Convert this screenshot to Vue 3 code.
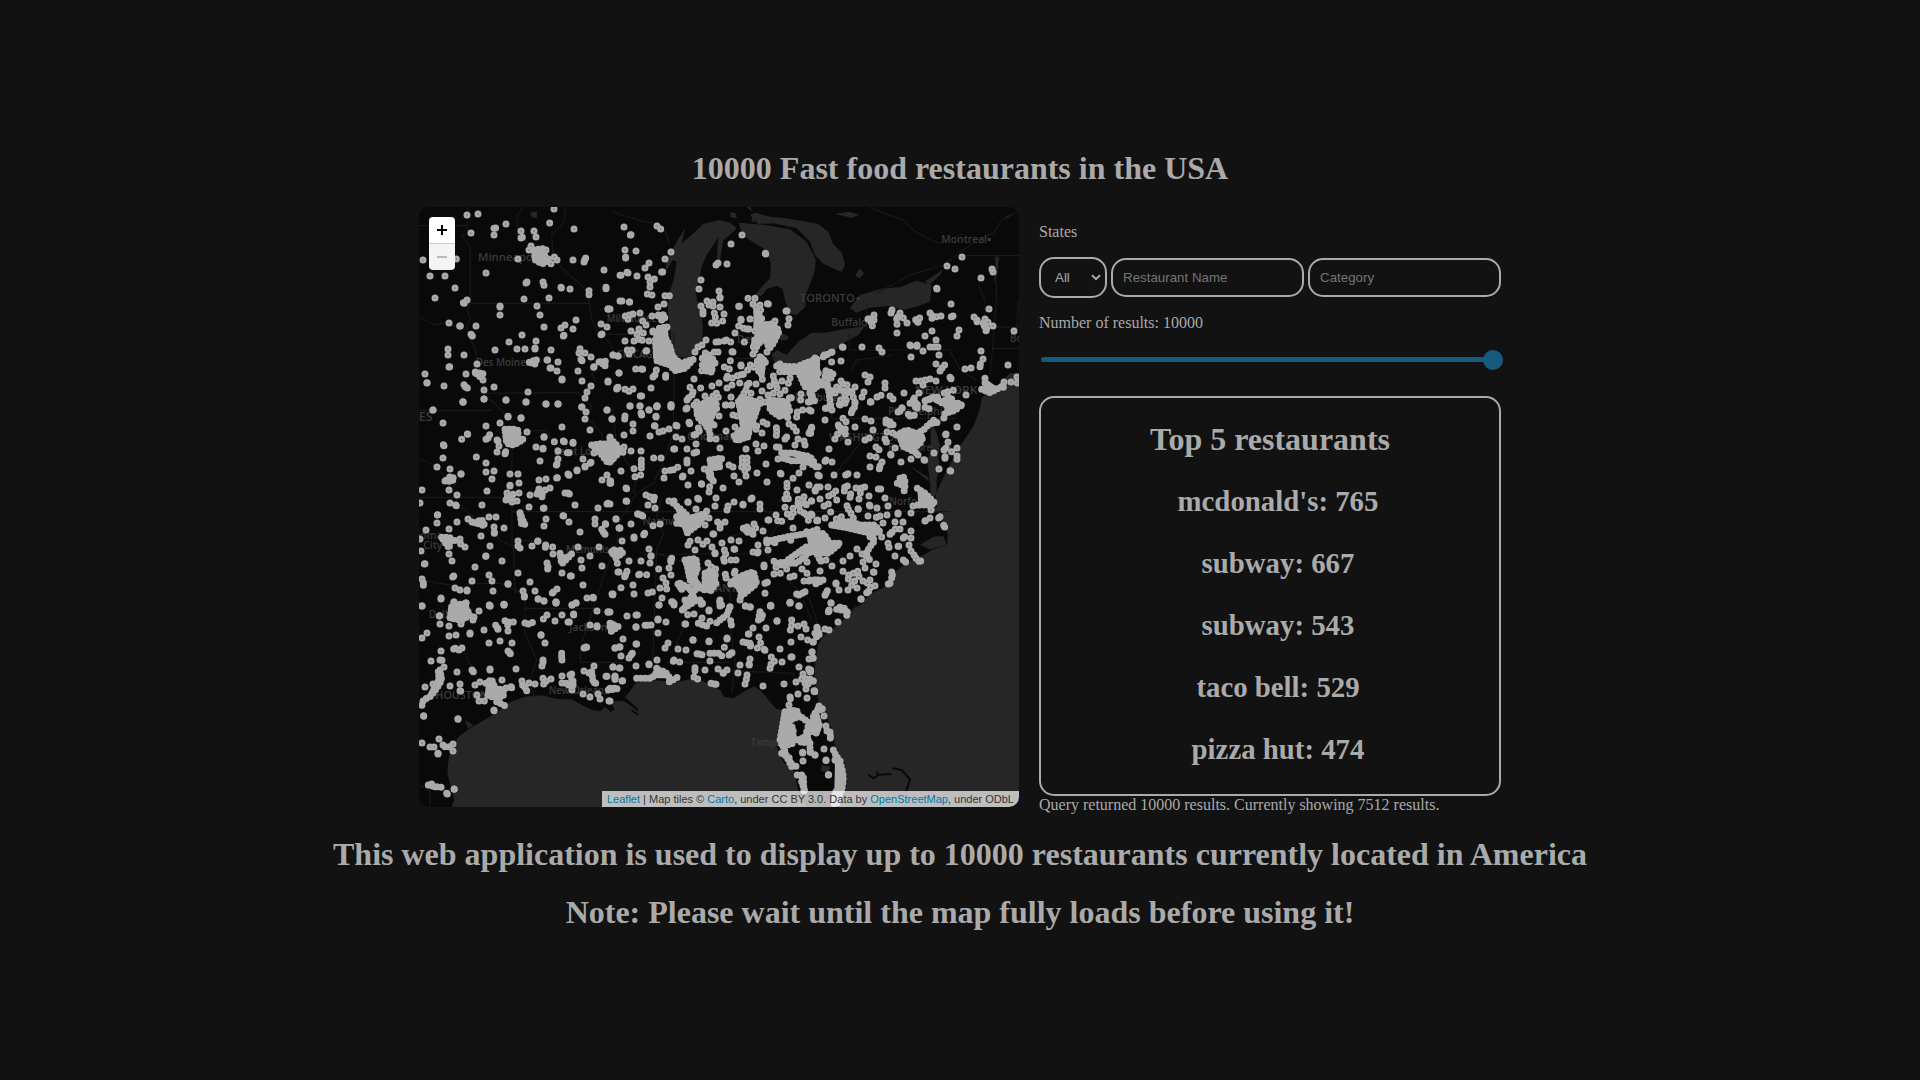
<script setup>
const top = [
  "mcdonald's: 765",
  'subway: 667',
  'subway: 543',
  'taco bell: 529',
  'pizza hut: 474'
]

// Restaurant positions by map sector: [x offset, y offset, "x,y x,y ..."]
const sectors = [
  [0, 0, '171,45 204,42 288,72 183,99 252,85 257,84 252,105 333,93 337,112 333,114 372,93 378,111 419,69 432,27 492,87 39,180 139,177 60,228 105,228 228,219 135,264 75,294 171,300 160,308 163,310 324,177 357,150 363,138 408,150 433,171 441,180 423,191 489,180 522,186 527,174 524,180 582,210 351,246 348,249 399,246 402,256 453,262 454,264 480,267 537,272 537,284 588,262 588,266 630,226 630,303 594,326 594,328 342,297 417,294 381,318 390,345 270,318 270,321 270,345 117,369 149,378 151,378 198,378 183,403 187,408 402,381 465,375 453,384 489,387 498,360 462,406 460,408 573,372 591,381 573,404 576,402 336,405 297,426 378,423 321,447 345,447 375,444 375,447 423,450 255,450 114,447 114,465 162,465 119,500 117,501 201,492 45,522 51,548 51,549 102,558 168,522 413,480 411,480 444,486 423,504 420,504 441,513 456,537 456,540 510,446 507,459 525,459 513,478 516,482 543,471 504,513 552,500 551,502 567,486 609,465 624,468 627,519 594,543 594,546 516,543 543,558 531,576 525,594 621,564 620,567 515,621 222,570 252,561 162,554 166,560 172,564 354,576 288,600 348,606 408,612 444,612 222,597 159,605 159,607 69,630 591,630 219,540 196,516'],
  [600, 0, '42,81 63,104 61,105 141,78 152,87 45,150 47,171 47,174 78,153 117,189 105,204 165,177 183,156 33,226 51,217 54,219 81,228 114,231 133,237 120,246 120,261 158,216 155,216 112,282 126,285 165,287 178,287 162,312 144,321 36,303 58,306 59,306 0,327 363,132 396,105 466,160 467,162 318,195 324,189 351,192 273,240 267,267 327,273 330,292 330,294 291,303 309,306 309,318 297,315 273,318 279,333 279,342 330,321 342,342 313,339 316,352 305,369 320,370 338,363 386,319 388,319 414,295 435,295 429,312 438,321 450,315 472,311 475,312 452,330 528,333 531,333 537,356 534,375 495,363 393,358 393,361 420,357 386,378 375,399 401,385 417,387 411,387 435,393 403,426 46,348 58,345 69,342 90,339 54,358 98,363 108,375 63,393 87,387 81,403 100,399 126,348 146,348 160,345 155,360 171,381 153,387 129,393 129,396 45,423 72,423 87,418 97,421 117,423 52,450 66,450 57,462 108,453 110,452 9,465 24,468 27,519 22,564 24,562 45,568 57,574 69,567 77,507 94,507 98,508 139,510 135,525 129,531 167,526 167,532 123,564 91,588 95,588 60,618 90,618 117,630 141,618 141,620 183,615 183,621 288,420 276,435 264,441 255,456 318,426 326,425 343,423 349,420 362,426 313,456 324,456 366,455 369,456 361,482 286,459 297,465 277,475 293,475 308,477 290,489 308,490 275,512 290,513 303,516 277,495 315,489 252,537 240,562 249,576 236,593 246,585 272,564 285,588 306,558 327,549 319,580 309,588 325,592 260,606 231,624 252,615 275,624 290,610 314,606 350,535 352,529 367,534 382,527 393,524 400,523 366,555 351,564 363,591 346,615 364,615 389,549 411,555 417,550 438,552 408,570 423,580 402,580 395,592 390,600 414,598 402,616 343,501 358,507 393,495 393,498 413,510 421,495 429,462 435,450 471,456 430,440 436,430 453,473 442,483 461,480 466,487 441,493 453,505 446,513 454,522 457,538 432,502 456,573 480,558 474,585 490,580 498,553 510,582 525,571 501,564 516,543 535,550 540,534 493,543 490,528 509,515 538,594 544,593 573,582 604,592 572,600 595,606 495,606 465,606 450,598 452,610 484,618 519,624 527,620 520,606 440,618 427,625 600,576 624,519 507,495 545,507 510,492 625,555 612,567'],
  [1200, 0, '456,171 411,198 435,207 380,265 381,267 513,234 546,207 549,216 423,312 537,327 246,330 243,339 192,345 180,357 192,360 183,366 187,377 174,357 270,339 264,350 280,354 260,357 261,373 291,369 261,399 329,354 317,359 323,365 324,367 360,339 367,347 379,350 366,355 393,348 424,350 429,348 345,408 366,393 378,420 447,390 441,408 492,351 501,360 501,365 525,357 534,367 549,378 523,378 530,386 528,392 612,393 97,441 99,442 156,441 207,444 216,456 303,471 300,435 302,437 321,435 321,439 339,453 360,441 372,441 384,441 387,465 378,492 404,495 396,504 390,513 465,507 483,504 513,453 519,477 511,492 510,500 594,495 165,525 180,531 174,546 93,483 66,456 65,486 43,465 318,543 333,543 346,540 360,537 378,543 339,555 420,532 423,536 135,561 162,576 156,591 225,549 225,564 282,579 213,586 201,591 240,588 249,597 181,605 183,606 468,585 276,624 313,594 327,579 318,610 310,600 350,600 360,596 369,591 381,600 403,579 413,575 430,571 425,597 388,603 409,615 454,615 582,546 603,546 621,531 622,549 580,562 24,519 93,543 99,552 111,554 117,573 126,577 130,592 105,585 92,600 88,613 109,600 135,606 133,622 80,561 75,579 65,572 25,545 37,555 52,553 60,600 62,616 46,625 6,585 9,600 15,474'],
  [0, 600, '69,30 159,6 222,-3 288,0 348,6 408,12 444,12 99,69 294,49 294,51 333,53 333,55 270,69 228,78 351,96 456,81 516,21 528,36 525,57 591,30 606,57 540,90 239,104 234,114 228,118 261,120 264,123 267,138 261,156 287,155 285,161 172,102 173,103 155,118 100,134 102,137 99,174 81,201 120,207 153,222 117,270 141,285 36,270 30,309 120,309 137,315 139,317 82,345 83,344 81,369 48,390 30,417 141,366 117,387 33,453 126,483 45,491 43,492 199,171 228,189 228,216 252,213 246,237 231,273 300,222 324,222 300,256 300,258 327,249 402,110 402,112 378,141 399,145 399,147 390,183 433,125 460,123 463,125 489,127 489,130 444,153 472,158 477,158 444,177 441,192 439,195 440,234 442,233 387,240 408,237 474,222 477,226 501,210 501,212 525,201 525,199 519,177 543,187 540,190 552,159 603,126 600,111 576,240 591,225 600,243 600,250 465,279 474,279 478,282 387,267 420,264 405,270 381,282 396,282 396,290 360,285 357,321 402,324 400,325 216,315 495,315 564,324 591,312 594,310 291,279 309,283 327,279 288,300 306,306 321,303 402,378 408,357 459,347 461,348 477,366 510,396 555,357 555,372 586,371 587,373 575,388 580,396 585,403 618,357 627,384 174,357 186,366 237,351 258,351 252,381 282,384 253,397 253,400 240,438 213,408 228,468 227,469 195,501 276,483 324,519 366,438 384,423 383,424 407,435 406,442 324,423 324,438 330,444 428,441 429,462 504,441 567,441 540,468 513,480 516,504 411,489 414,500 413,507 456,519 481,528 484,528 576,498 150,417 152,432 165,441 117,462 36,537 40,548 40,556 93,594 131,528 128,531 186,543 237,525 246,543 249,573 135,564 150,570 171,570 171,573 360,546 375,573 339,573 343,587 343,591 384,597 402,603 430,576 427,579 441,567 294,551 294,553 438,606 438,609 519,555 531,594 549,592 550,594 606,582 608,584 498,609 486,615 132,606 168,609 36,618 238,615 240,618 282,613 282,615 624,516 618,474 153,222 105,243'],
  [600, 600, '6,57 45,48 44,57 60,18 90,18 93,39 95,45 117,30 141,17 140,20 183,14 183,20 138,49 138,51 69,72 69,93 42,105 120,108 133,77 135,78 147,96 159,93 177,87 198,76 201,78 198,111 216,117 191,147 194,147 42,141 39,157 63,153 93,153 131,174 153,174 94,180 94,192 94,204 72,206 75,230 92,225 33,213 48,264 50,266 2,243 2,250 165,213 181,211 190,209 203,202 162,234 219,228 217,231 243,213 231,180 231,189 231,147 252,159 260,156 258,132 228,27 231,0 237,67 239,71 265,84 268,93 258,103 252,105 330,144 348,93 327,48 312,75 318,117 348,15 365,15 369,45 381,48 375,81 303,30 357,195 369,201 408,147 397,174 411,174 411,187 397,187 395,201 413,203 405,212 408,228 372,228 387,246 441,219 438,132 462,138 444,153 468,192 471,246 511,220 513,222 456,99 459,66 471,72 440,78 438,88 499,83 500,94 499,106 525,117 530,111 537,72 550,81 559,93 564,117 582,123 585,135 555,135 605,84 600,94 597,100 562,36 578,30 598,30 560,51 499,141 507,142 504,177 549,235 567,219 579,201 597,255 531,250 531,262 530,282 525,296 535,296 561,270 630,261 615,270 565,298 582,290 604,303 583,309 589,314 274,251 275,253 234,255 339,264 283,207 300,204 296,216 299,230 310,243 299,260 297,276 263,295 266,298 234,306 234,307 318,294 315,318 354,318 351,330 372,306 399,315 399,313 423,297 426,294 450,312 450,327 108,285 120,290 133,292 131,300 114,315 135,324 177,303 192,303 48,303 50,304 0,312 18,357 28,384 30,384 63,372 72,411 72,415 104,400 101,404 36,423 83,342 93,345 98,348 129,377 150,372 84,342 117,447 123,467 123,469 120,489 57,483 93,483 51,514 47,524 44,530 27,516 22,490 89,523 86,524 110,524 146,507 177,504 183,525 33,563 69,555 72,582 9,582 8,584 114,579 127,576 150,564 170,567 168,549 159,534 156,594 147,615 188,606 192,610 185,475 182,480 183,485 204,552 210,560 215,568 258,327 290,333 297,354 285,375 323,366 345,366 331,373 330,384 311,402 309,402 240,424 234,435 255,450 264,420 279,433 291,423 306,441 315,458 315,461 336,429 363,420 387,423 372,447 374,448 343,450 347,462 341,476 343,484 363,480 378,480 400,385 411,381 432,372 437,384 420,391 413,397 427,397 429,403 408,391 459,393 444,435 471,429 474,450 429,456 442,459 444,455 477,360 474,360 498,345 503,362 515,364 462,495 462,500 549,384 591,486 576,507 591,520 552,528 540,531 492,522 511,520 498,502 492,484 530,507 582,543 597,543 618,540 577,580 585,575 560,582 567,585 540,607 540,609 567,618 564,310 590,345 603,342 623,362 595,361 582,339 567,318 571,333 543,350 525,322 532,342 550,338 549,325 294,489 304,501 317,507 316,525 346,523 348,534 375,514 373,520 362,552 465,550 472,547 465,580 276,609 274,613 297,630 330,600 330,618 359,622 406,618 421,621 481,618 483,618 258,510 241,513'],
  [1200, 600, '3,33 45,60 60,15 66,30 50,25 90,15 105,10 135,10 127,30 124,38 5,82 2,100 0,5 99,55 108,65 135,81 87,80 95,93 106,87 106,102 83,102 75,117 114,126 57,147 165,57 183,63 181,6 189,90 165,120 178,114 228,60 240,75 228,69 231,96 248,99 225,117 229,126 255,144 242,163 243,165 198,141 207,149 180,168 198,171 216,186 210,198 208,206 180,201 273,186 45,184 48,180 66,186 10,190 25,200 24,225 28,228 72,225 107,225 114,221 141,225 276,24 264,36 295,43 270,33 441,81 408,102 407,104 414,126 408,144 425,155 441,144 441,168 441,178 405,170 405,175 402,150 372,159 387,207 420,212 422,213 342,179 344,181 303,177 324,165 205,267 212,267 225,294 177,288 147,297 138,264 154,264 164,261 151,279 104,262 112,258 103,273 122,282 120,292 77,273 68,282 80,300 54,261 21,261 16,273 30,297 56,288 42,318 55,312 5,303 4,345 45,354 62,336 23,360 20,362 94,350 79,357 111,317 115,328 123,340 130,354 144,326 145,328 174,348 178,315 180,318 201,324 234,318 231,345 210,348 199,352 264,339 264,342 303,339 219,369 255,366 279,366 303,393 303,414 280,414 284,410 256,387 270,387 246,397 240,403 234,430 237,442 264,439 266,439 297,435 303,453 312,465 318,475 327,484 332,483 255,468 280,480 287,486 215,411 345,363 346,362 360,354 386,354 390,350 401,376 404,381 363,330 309,318 323,315 141,447 120,468 99,483 156,462 171,468 159,486 165,504 198,492 190,516 192,517 30,513 33,483 48,480 66,498 99,514 116,525 115,537 130,520 143,514 147,529 159,543 134,543 125,556 180,540 172,549 141,564 114,570 78,549 78,552 87,570 52,572 48,580 45,586 63,609 153,597 57,630 245,516 247,525 245,533 235,552 240,550 182,562 195,557 176,574 170,578 6,345'],
  [0, 1200, '36,18 132,6 168,9 207,33 238,16 240,18 282,13 282,15 93,-3 90,72 117,78 89,47 88,48 153,72 192,51 189,60 180,99 180,102 222,90 36,114 51,99 117,108 138,105 257,76 262,83 264,88 294,93 310,66 345,69 400,57 411,45 435,63 456,45 491,42 491,45 478,66 474,66 385,-3 402,3 438,6 438,9 486,15 498,9 540,75 561,77 561,80 561,33 594,35 594,37 405,129 393,104 393,106 237,129 270,123 306,129 294,153 299,158 301,161 93,153 131,147 136,145 147,150 156,144 63,183 90,180 96,181 102,201 141,216 186,210 190,215 240,207 240,210 318,207 120,258 150,252 150,272 152,273 69,252 45,261 41,347 41,349 144,356 144,358 195,255 210,246 276,240 303,260 305,263 288,264 201,285 207,303 223,303 252,330 252,332 399,180 399,187 396,198 455,160 455,170 456,180 527,141 530,142 522,144 615,144 628,141 336,243 338,256 345,262 350,272 357,249 375,252 399,235 408,244 401,252 423,237 456,228 480,225 485,222 456,249 468,250 489,243 489,255 486,270 522,213 552,198 537,219 609,201 628,204 588,229 591,229 615,228 615,238 519,282 540,291 564,282 570,297 597,303 36,429 87,417 99,435 129,432 129,453 84,460 84,462 60,441 72,441 132,567 133,568 110,580 112,582'],
  [600, 1200, '0,36 51,48 82,45 78,45 147,15 144,57 144,60 168,66 78,80 78,82 105,76 112,76 123,75 144,99 39,117 80,132 78,132 15,144 30,141 174,129 165,144 204,147 228,150 249,119 249,121 297,123 297,125 33,168 67,160 63,165 57,174 261,161 267,162 276,164 300,183 343,142 366,158 363,160 357,165 351,114 351,117 399,126 417,102 415,102 429,84 447,111 452,129 420,130 421,138 442,144 462,148 465,151 468,84 501,62 501,64 510,147 545,60 545,76 541,90 564,78 582,72 588,87 573,111 593,120 610,126 543,126 543,171 546,171 484,171 493,184 483,193 480,205 516,186 420,177 418,195 417,193 390,195 384,219 411,225 409,238 405,252 459,258 522,252 558,246 567,201 596,207 600,215 579,222 606,156 597,177 609,175 621,82 624,96 620,106 192,180 190,184 209,186 141,180 117,192 117,194 78,198 9,201 30,204 15,230 15,237 38,242 36,243 0,303 255,203 255,212 285,210 324,207 339,218 340,220 351,210 252,231 263,237 303,250 313,252 318,253 540,291 541,296 537,315 564,282 591,294 614,273 612,272 588,267 594,252 575,237 591,237 608,243 585,250 600,237 540,9 567,18 482,16 482,18 406,18 420,21 233,44 252,42 225,72 227,72 217,30 297,33 276,54 300,64 329,6 335,15 274,10 189,8 192,15 390,0 578,457 579,483 602,457 615,465 578,459'],
  [1200, 1200, '63,9 153,-3 57,33 55,35 84,66 21,84 45,87 57,90 9,126 6,156 9,174 2,210 2,215 10,243 5,243 13,274 14,275 27,318 37,326 30,330 42,348 48,378 51,393 60,396 61,407 61,414 42,447 48,482 48,480 55,525 56,524 15,465']
]
const dots = sectors.flatMap(([dx, dy, s]) =>
  s.split(' ').map((p) => {
    const [x, y] = p.split(',').map(Number)
    return [x + dx, y + dy]
  })
)

// Metro areas where markers merge into one mass
const clusters = [
  // Minneapolis, Omaha, Des Moines, Quad Cities
  [0, 0, 'M372 150L398 146L398 162L418 180L396 192L376 180ZM196 518L220 520L210 530ZM358 487L380 478L375 492ZM573 485L586 484L585 500Z'],
  // Chicago round the lake, Detroit, Cleveland
  [600, 0, 'M145 345L163 345L165 358ZM148 385L165 382L165 410L180 440L188 470L212 490L250 478L225 505L195 512L180 495L140 482L136 420ZM284 470L306 480L306 510L285 508ZM440 335L455 355L450 375L485 372L508 392L490 430L478 445L462 410L440 440L430 425L442 410L460 400L440 385ZM450 470L460 480L455 515ZM620 478L600 484L560 500L565 515L585 560L620 565ZM500 498L560 500L565 515L512 515M300 600L318 605L320 630L270 630M420 620L405 590M498 610L530 620'],
  [1200, 0, 'M20 478L0 490L0 560L20 545ZM40 470L66 456M48 512L70 520L60 540L45 530ZM35 545L55 565L60 600M525 535L525 555L540 570L560 560M515 568L540 578L575 560M300 610L325 612M345 602L385 590M395 608L420 590L430 612L455 618M520 370L532 388M90 570L125 580M0 580L18 610'],
  // Kansas City, St. Louis, Wichita, Oklahoma City, Tulsa, Little Rock
  [0, 600, 'M285 88L320 88L328 95L315 112L340 118L312 135L290 130ZM110 240L122 228L134 236L122 246ZM195 368L215 358L225 378ZM330 338L338 360L345 373L335 374ZM95 412L120 412L118 445ZM122 418L145 425M450 460L462 480L485 462L455 492ZM545 135L580 130L610 145L615 170L595 190L572 160ZM385 275L400 285M612 450L630 460M292 292L315 290M140 628L165 618'],
  // Indianapolis, Cincinnati, Columbus, Louisville, Nashville, Birmingham, Atlanta
  [600, 600, 'M0 115L20 135L30 155L0 185ZM260 20L300 0L318 20L300 60L308 75L280 70L262 50ZM290 80L300 95L300 120M385 5L430 0L445 15L430 60L418 85L415 110L380 122L372 108L400 85L395 45ZM480 0L530 5L540 35L510 50L480 30ZM530 40L535 60M300 180L325 175L330 200L305 205ZM325 185L342 170M300 210L304 235L310 243M515 158L555 160L600 170L615 190M520 175L545 182L590 183L625 205M190 310L215 330L240 355L285 340L270 370L235 395L225 408M200 350L240 360M200 370L240 375M5 455L35 450L38 462L15 470ZM225 480L258 475L262 505L250 540ZM285 520L305 510L318 550L300 575L285 560ZM255 570L235 605L222 625L260 600M210 550L240 565L255 600M230 490L240 540L260 560L290 572M365 545L400 525L430 515L440 550L410 575L390 590M380 555L430 560M470 425L510 415L550 407L590 400L630 385M515 495L540 475L590 440L630 435M500 490L525 485M530 490L560 490L600 455L630 455M590 395L615 410L630 460M535 410L545 425M470 420L500 430'],
  // Washington to Philadelphia, Raleigh, Charlotte, Norfolk
  [1200, 600, 'M85 75L103 95M310 10L325 15L320 28ZM345 22L362 28M405 10L450 10L438 30L405 40L400 60M240 65L255 80M300 48L320 45M260 105L290 90L320 100L340 90L355 75L372 60L390 75M270 110L300 105L340 110L330 130L310 145L280 140ZM282 140L318 158M270 235L280 230L285 245ZM262 250L285 258L282 275M322 265L345 280L375 310L355 315L325 315M0 410L40 400L60 430L90 430L55 460L10 455ZM65 375L90 365L125 365L150 375L195 375L210 395L180 400L120 385ZM180 410L195 420L180 440L165 465L180 480M10 440L30 480M0 540L40 540L10 555M90 622L115 628M80 628L110 632'],
  // Dallas, Houston, Austin, San Antonio, New Orleans, Baton Rouge, Rio Grande
  [0, 1200, 'M125 20L160 10L180 45L155 60L120 55ZM285 62L300 68L290 78M355 72L375 65M90 210L95 240L80 265L60 290L40 300L35 318M85 215L88 250M228 250L245 238L255 265L280 270L280 290L240 290L225 280M260 305L290 320M485 240L490 250L475 255M545 215L550 250L560 245L552 258M595 270L630 265M600 70L625 80L602 95M55 555L75 560L95 562M65 552L80 565M105 440L120 440'],
  [600, 1200, 'M0 80L22 78M5 72L18 85M185 5L190 12M225 0L248 0L230 20M270 0L278 12M450 35L460 50L445 62ZM360 20L350 45L330 60L318 70M265 70L290 78M362 62L365 80M80 235L125 235L145 210L165 215L180 235M178 245L210 228M140 205L145 225M0 265L22 265M300 160L330 160L340 175M410 128L430 140M525 335L560 330L565 350L530 365L550 385L548 430L518 440L510 420ZM565 345L600 370M620 350L628 375L618 400L590 385ZM590 395L595 420L580 430L555 415M520 440L530 470L545 500L562 498M515 460L540 475M562 525L580 525L582 580M575 545L585 575M610 350L628 320'],
  [1200, 1200, 'M90 22L115 38L108 50M15 100L35 105M20 110L28 95M15 340L10 370L25 380L15 405M0 430L0 460M70 450L80 470L92 485M75 480L95 500L100 530L98 560L88 575L75 575L72 620M90 520L95 570L85 590L80 615']
]

const labels = [
  ['Minneapolis', 204, 182, 200, 31], ['Des Moines', 197, 498, 165, 31],
  ['Milwaukee', 590, 365, 150, 31], ['CHICAGO', 620, 473, 130, 31],
  ['Detroit', 982, 430, 100, 31], ['TORONTO', 1170, 307, 164, 31],
  ['Buffalo', 1264, 378, 108, 31], ['Montreal', 1594, 130, 137, 31],
  ['NEW YORK', 1516, 581, 186, 32], ['Boston', 1800, 427, 100, 31],
  ['Pittsburgh', 1155, 603, 150, 31], ['Philadelphia', 1435, 646, 180, 31],
  ['WASHINGTON', 1258, 723, 220, 32], ['Baltimore', 1435, 752, 130, 31],
  ['Cincinnati', 832, 721, 145, 31], ['Saint Louis', 433, 764, 150, 31],
  ['Nashville', 698, 975, 135, 31], ['Memphis', 468, 1060, 130, 31],
  ['Norfolk', 1438, 916, 108, 31], ['Oklahoma', -54, 1018, 150, 31],
  ['City', 40, 1048, 57, 31], ['ATLANTA', 860, 1177, 140, 32],
  ['Dallas', 56, 1254, 90, 31], ['Jackson', 478, 1293, 114, 31],
  ['HOUSTON', 76, 1498, 160, 32], ['New Orleans', 416, 1482, 180, 31],
  ['Tampa', 1022, 1638, 92, 31], ['STATES', -62, 664, 130, 35]
]
</script>

<template>
  <main class="page">
    <h1>10000 Fast food restaurants in the USA</h1>

    <section class="content">
      <div class="map">
        <svg class="tiles" viewBox="27 21 1800 1800" width="600" height="600">
          <g class="water">
            <path d="M125 1821L132 1800L126 1770L112 1722L116 1675L130 1630L150 1607L185 1582L230 1556L272 1530L300 1507L345 1490L395 1486L440 1497L485 1498L510 1512L545 1530L572 1533L585 1520L603 1536L615 1528L600 1505L640 1502L655 1512L685 1535L683 1525L645 1492L655 1480L678 1448L720 1440L800 1446L860 1434L900 1455L930 1470L942 1490L970 1495L1010 1470L1033 1459L1055 1475L1082 1508L1100 1527L1122 1530L1105 1600L1100 1640L1122 1690L1155 1715L1162 1765L1190 1821Z" />
            <path d="M1290 1821L1310 1760L1308 1715L1298 1680L1275 1635L1268 1590L1245 1545L1225 1500L1212 1450L1215 1390L1224 1335L1238 1310L1275 1282L1310 1250L1335 1222L1352 1215L1378 1183L1430 1158L1445 1125L1490 1088L1535 1068L1570 1048L1612 1034L1613 1000L1590 950L1575 900L1582 872L1608 815L1650 738L1690 680L1710 625L1716 590L1745 578L1800 520L1827 518L1827 1821Z" />
            <path d="M827 82L803 120L770 180L765 220L788 180L800 185L792 235L775 290L774 340L782 400L784 445L800 470L835 474L862 450L878 412L878 370L866 325L857 272L868 235L875 200L890 165L910 135L925 110L920 175L930 180L940 120L965 100L980 85L960 68L930 60L880 72L845 105L815 130Z" />
            <path d="M985 68L1060 74L1140 88L1190 125L1216 175L1214 215L1187 285L1186 320L1160 345L1140 342L1125 300L1118 268L1100 257L1070 268L1054 288L1036 285L1060 255L1080 235L1082 190L1068 150L1035 130L1000 108Z" />
            <path d="M1020 45L1035 38L1080 50L1130 55L1190 65L1225 72L1255 95L1268 130L1296 160L1305 195L1295 215L1265 203L1238 190L1215 165L1200 125L1160 85L1090 70L1045 72Z" />
            <path d="M1200 162L1217 180L1215 205L1200 220ZM1010 21L1027 35L1025 65L1035 65L1022 21ZM1275 42L1320 35L1348 45L1325 53ZM1350 205L1362 220L1350 235L1335 228ZM962 35L978 40L980 55L962 52ZM360 38L382 34L380 55L365 52ZM1780 55L1810 38L1795 55Z" />
            <path d="M1320 325L1350 285L1420 265L1470 262L1520 242L1565 255L1560 305L1525 318L1480 330L1435 318L1375 324L1340 338ZM1545 245L1600 208L1590 225L1558 255Z" />
            <path d="M1085 465L1100 450L1130 465L1165 425L1205 398L1245 398L1310 386L1365 378L1345 405L1300 430L1270 455L1210 470L1160 490L1095 492ZM1113 398L1137 410L1130 421L1110 420ZM1757 170L1767 170L1762 225L1752 250Z" />
            <path d="M1562 682L1572 682L1582 705L1590 735L1584 770L1590 800L1580 835L1580 885L1562 890L1560 845L1552 790L1562 740ZM1495 795L1555 832L1558 845ZM1610 720L1625 735L1615 770L1606 740ZM1530 1035L1570 1010L1600 1008L1610 1034L1560 1048ZM1525 910L1590 925L1590 940L1520 915ZM1235 1695L1262 1700L1255 1720L1233 1712ZM152 1605L190 1575L165 1560L175 1588Z" />
          </g>
          <g class="borders">
            <path d="M27 77H172V21M172 77V100L155 108L181 140V310H537M181 310L172 330L180 355L170 390L196 450L210 520L222 560L240 600L260 615L280 640L306 660V1030M27 350L75 375L110 368L165 390M220 580L505 577L520 595L545 620L530 650L575 700L580 740M340 21L322 45V105L372 140M464 21V65L425 105L430 180L490 235L535 275L545 360L560 390L590 420L610 450L590 500L545 520L555 540L530 590M570 403H780M608 30L620 40L700 65L740 70L770 100L778 135M608 620L620 740L680 830L670 880" />
            <path d="M27 776L80 800L110 840L150 920L190 950L270 1020L306 1038L345 1020L420 1030M27 892H310M306 935H610M27 631H250M340 695L410 690L430 730M310 1035L316 1180M27 1140L90 1150L150 1160L200 1150L270 1150L345 1182V1300L380 1380L360 1440L372 1490M345 1225H550L580 1130L620 1030L630 960L680 880L730 850L755 800L790 700L792 400M130 1290L200 1430M510 1387H650M550 1225L515 1330L510 1387" />
            <path d="M610 935H1620M700 1062H1070M755 890L740 950L760 1000L740 1050L740 1060L728 1387M740 1060L960 1130L960 1270L975 1390L965 1480M770 1387H960M960 1412L1150 1420L1160 1470M1070 1062L1120 1130L1200 1200L1225 1280M1050 1060L1100 980L1170 940M1100 905L1180 870L1250 860L1300 790L1360 720L1400 670M1265 655H1640M1265 655V530M1318 450H1620L1650 510L1700 540M1318 450V400M1370 390V310M1320 520L1340 480L1450 465M1667 167H1827M1755 167L1760 300L1740 530M1705 255L1725 300L1725 380L1827 382M1750 445H1827M1820 390L1825 300M1380 21L1420 40L1480 60L1510 90L1560 120L1590 130L1660 100M1400 280L1500 225L1600 195L1700 120L1750 100L1775 60L1827 35M27 1755L60 1770V1820M795 1340L840 1240L870 1230M1180 1200L1205 1260M960 1010L1060 980M980 475H1100M792 490V620M1000 480V560" />
            <path class="coast" d="M1375 1725L1392 1735L1405 1724L1445 1722M1400 1715L1407 1726M1448 1705L1475 1710L1500 1737L1495 1755L1488 1775M665 1530L685 1545" />
          </g>
          <g class="labels">
            <text v-for="l in labels" :key="l[0]" :x="l[1]" :y="l[2]" :textLength="l[3]" :font-size="l[4]" lengthAdjust="spacingAndGlyphs">{{ l[0] }}</text>
            <path d="M1340 291h9v9h-9zM1733 114h9v9h-9z" />
          </g>
          <g class="clusters">
            <path v-for="(c, i) in clusters" :key="i" :transform="`translate(${c[0]} ${c[1]})`" :d="c[2]" />
          </g>
          <g class="dots">
            <circle v-for="(d, i) in dots" :key="i" :cx="d[0]" :cy="d[1]" r="6" />
          </g>
        </svg>
        <div class="zoom">
          <button type="button"><svg viewBox="0 0 26 26"><path d="M8 13H18M13 8V18" /></svg></button>
          <button type="button" disabled><svg viewBox="0 0 26 26"><path d="M8 13H18" /></svg></button>
        </div>
        <div class="attribution"><a>Leaflet</a> | Map tiles © <a>Carto</a>, under CC BY 3.0. Data by <a>OpenStreetMap</a>, under ODbL</div>
      </div>

      <aside class="panel">
        <p>States</p>
        <div class="filters">
          <div class="select">All
            <svg width="10" height="7" viewBox="0 0 10 7"><path d="M1 1.2L5 5.2L9 1.2" /></svg>
          </div>
          <input type="text" placeholder="Restaurant Name">
          <input type="text" placeholder="Category">
        </div>
        <p>Number of results: 10000</p>
        <div class="slider"><span class="thumb"></span></div>
        <div class="top">
          <h1>Top 5 restaurants</h1>
          <h2 v-for="(t, i) in top" :key="i">{{ t }}</h2>
        </div>
        <span class="status">Query returned 10000 results. Currently showing 7512 results.</span>
      </aside>
    </section>

    <h1 class="about">This web application is used to display up to 10000 restaurants currently located in America</h1>
    <h1 class="note">Note: Please wait until the map fully loads before using it!</h1>
  </main>
</template>

<style>
body { background: #121212; }
</style>

<style scoped>
.page {
  box-sizing: border-box;
  height: 1080px;
  padding-top: 150px;
  overflow: hidden;
  background: #121212;
  color: #aaa;
  font: 16px "Liberation Serif", "Times New Roman", serif;
  display: flex;
  flex-direction: column;
  align-items: center;
}
h1 { margin: 0; font-size: 32px; line-height: 37px; white-space: nowrap; }
.content { display: flex; gap: 20px; margin-top: 20px; width: 1082px; }
.map {
  position: relative;
  width: 600px;
  height: 600px;
  flex: none;
  border-radius: 10px;
  overflow: hidden;
  background: #090909;
}
.tiles { display: block; }
.water { fill: #262626; }
.borders { fill: none; stroke: #191919; stroke-width: 3.5; }
.coast { stroke: #090909; stroke-width: 6; }
.labels {
  fill: #3b3b3b;
  font-family: "Open Sans", "Noto Sans", sans-serif;
  font-weight: 600;
}
.clusters {
  fill: #aaa;
  stroke: #aaa;
  stroke-width: 21;
  stroke-linejoin: round;
  stroke-linecap: round;
  stroke-dasharray: 0 13;
}
.dots { fill: #aaa; fill-opacity: 0.2; stroke: #aaa; stroke-width: 9; }
.zoom {
  position: absolute;
  left: 10px;
  top: 10px;
  width: 26px;
  border-radius: 4px;
  overflow: hidden;
}
.zoom button {
  display: block;
  width: 26px;
  height: 26px;
  padding: 0;
  border: 0;
  background: #fff;
}
.zoom button:first-child { height: 27px; border-bottom: 1px solid #ccc; }
.zoom button:disabled { background: #f4f4f4; }
.zoom svg { display: block; width: 26px; height: 26px; fill: none; stroke: #000; stroke-width: 2; }
.zoom button:disabled svg { stroke: #bbb; }
.attribution {
  position: absolute;
  right: 0;
  bottom: 0;
  padding: 0 5px;
  background: rgba(255, 255, 255, 0.7);
  color: #333;
  font: 11px/16px "Liberation Sans", Arial, sans-serif;
  white-space: nowrap;
}
.attribution a { color: #0078a8; }
.panel { width: 462px; flex: none; }
p { margin: 16px 0; line-height: 18px; }
.filters { display: flex; align-items: center; gap: 4px; height: 41px; }
.select, input {
  box-sizing: border-box;
  border: 2px solid #aaa;
  border-radius: 15px;
  background: transparent;
  font: 13.333px "Liberation Sans", Arial, sans-serif;
  color: #aaa;
}
.select {
  display: flex;
  align-items: center;
  justify-content: space-between;
  width: 68px;
  height: 41px;
  padding: 0 4px 0 14px;
}
.select svg { fill: none; stroke: #aaa; stroke-width: 2; }
input { width: 193px; height: 39px; padding: 0 10px; outline: 0; }
input::placeholder { color: #757575; }
.slider {
  display: flex;
  align-items: center;
  justify-content: flex-end;
  height: 5px;
  margin: 25px 0 34px 2px;
  border-radius: 3px;
  background: #185a7d;
}
.thumb { flex: none; width: 20px; height: 20px; margin-right: -2px; border-radius: 50%; background: #185a7d; }
.top {
  box-sizing: border-box;
  height: 400px;
  padding-top: 23px;
  border: 2px solid #aaa;
  border-radius: 15px;
  text-align: center;
}
h2 { margin: 29px 0 0 16px; font-size: 28.8px; line-height: 33px; }
.top h1 + h2 { margin-top: 27px; }
.status { display: block; line-height: 18px; }
.about { margin-top: 22px; }
.note { margin-top: 21px; }
</style>
